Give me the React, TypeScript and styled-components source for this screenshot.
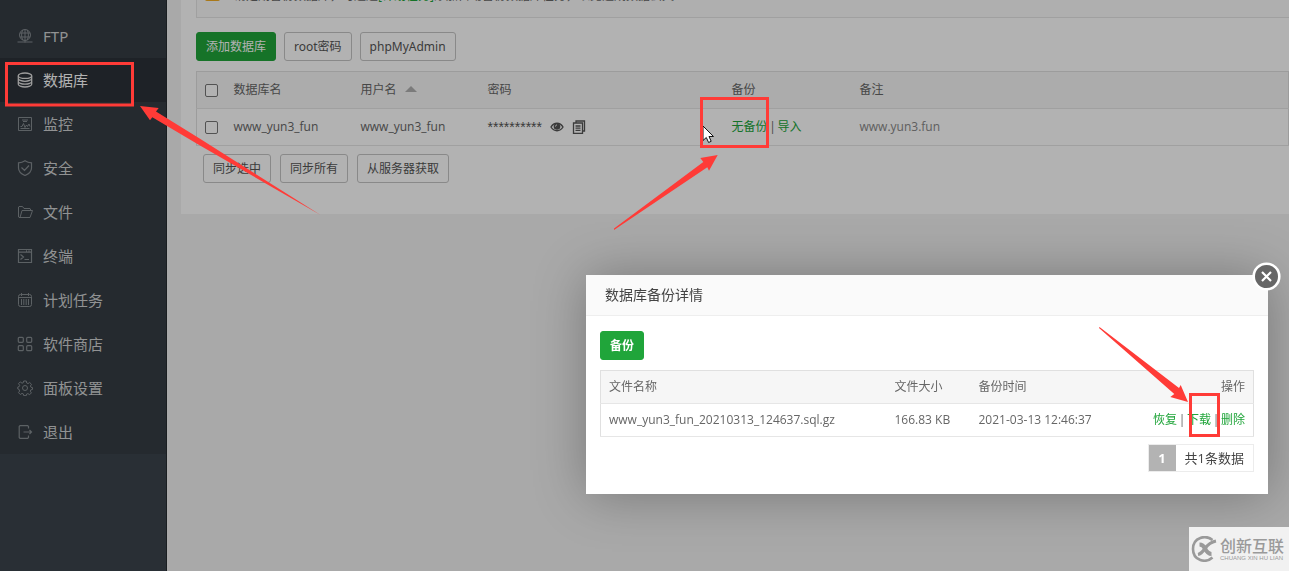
import React from 'react';
import styled, { createGlobalStyle } from 'styled-components';

const sans = '"Open Sans", "Noto Sans CJK SC", sans-serif';
const wideSans = '"Noto Sans", "Noto Sans CJK SC", sans-serif';

const GlobalStyle = createGlobalStyle`
  * { box-sizing: border-box; }
  body {
    margin: 0;
    background: #f3f3f3;
    color: #666;
    font: 12px/18px ${sans};
  }
  button { cursor: pointer; }
  a { text-decoration: none; }
`;

const Page = styled.div`
  display: flex;
  min-height: 100vh;
  overflow: hidden;
`;

const Sidebar = styled.nav`
  flex: none;
  width: 167px;
  background: #3c444d;
  border-right: 1px solid #262b30;
`;

const Menu = styled.ul`
  margin: 0;
  padding: 14px 0 0;
  list-style: none;
  background: #353d44;
`;

const MenuLink = styled.a<{ $active?: boolean }>`
  display: flex;
  align-items: center;
  gap: 10px;
  height: 44px;
  padding-left: 17px;
  background: ${(p) => (p.$active ? '#2c3138' : 'transparent')};
  color: ${(p) => (p.$active ? '#fff' : '#d0d2d3')};
  font: 15px/20px ${wideSans};

  svg {
    width: 16px;
    height: 16px;
    color: ${(p) => (p.$active ? '#e0e0e0' : '#858b90')};
  }
`;

const Main = styled.main`
  flex: 1;
  min-width: 0;
  padding-left: 14px;
`;

const Panel = styled.section`
  padding: 0 0 31px 15px;
  background: #fff;
`;

const Notice = styled.div`
  display: flex;
  align-items: flex-end;
  gap: 14px;
  height: 18px;
  padding: 0 0 12px 8px;
  overflow: hidden;
  background: #fbfbfb;
  border: solid #e6e6e6;
  border-width: 0 0 1px 1px;
`;

const WarnIcon = styled.span`
  flex: none;
  width: 15px;
  height: 16px;
  margin-bottom: 4px;
  border-radius: 2px;
  background: #f2ad24;
`;

const Toolbar = styled.div<{ $top: number; $indent?: number; $gap: number }>`
  display: flex;
  gap: ${(p) => p.$gap}px;
  padding-top: ${(p) => p.$top}px;
  padding-left: ${(p) => p.$indent ?? 0}px;
`;

const Button = styled.button<{ $primary?: boolean; $strong?: boolean }>`
  height: 29px;
  padding: 0 9px;
  border: 1px solid ${(p) => (p.$primary ? '#20a53a' : '#c4c4c4')};
  border-radius: 3px;
  background: ${(p) => (p.$primary ? '#20a53a' : '#fff')};
  color: ${(p) => (p.$primary ? '#fff' : '#555')};
  font: ${(p) => (p.$strong ? 700 : 400)} 12px/18px ${wideSans};
`;

const Table = styled.table<{ $row: number }>`
  width: 100%;
  border-collapse: collapse;
  table-layout: fixed;
  border: 1px solid #e0e0e0;

  th, td {
    height: ${(p) => p.$row}px;
    padding: 0 8px;
    border-bottom: 1px solid #e6e6e6;
    text-align: left;
    font-weight: 400;
    white-space: nowrap;
  }
  th { background: #f6f6f6; }
  .end { text-align: right; }
`;

const Check = styled.input`
  display: block;
  width: 13px;
  height: 13px;
  margin: 0;
  appearance: none;
  border: 1px solid #767676;
  border-radius: 2px;
  background: #fff;
`;

const SortArrow = styled.span`
  display: inline-block;
  margin-left: 8px;
  vertical-align: 2px;
  border: solid transparent;
  border-width: 0 6px 6px;
  border-bottom-color: #b0b0b0;
`;

const Password = styled.div`
  display: flex;
  align-items: center;
  gap: 8px;
  color: #555;
`;

const Stars = styled.span`
  font: 14px/18px "Liberation Sans", sans-serif;
`;

const IconButton = styled.button`
  display: flex;
  padding: 0;
  border: 0;
  background: none;
  color: #555;
`;

const GreenLink = styled.a`
  color: #20a53a;
`;

const Separator = styled.span`
  display: inline-block;
  width: 10px;
  text-align: center;

  &::before { content: "|"; }
`;

const Note = styled.span`
  color: #888;
`;

const Shade = styled.div`
  position: fixed;
  inset: 0;
  background: rgba(0, 0, 0, 0.3);
`;

const Dialog = styled.section`
  position: absolute;
  top: 275px;
  right: 21px;
  width: 682px;
  padding-bottom: 22px;
  background: #fff;
  box-shadow: 1px 1px 50px rgba(0, 0, 0, 0.3);
`;

const DialogTitle = styled.h2`
  margin: 0;
  padding: 0 19px;
  border-bottom: 1px solid #eee;
  background: #fafafa;
  color: #444;
  font-size: 14px;
  font-weight: 400;
  line-height: 40px;
`;

const DialogBody = styled.div`
  display: flex;
  flex-direction: column;
  align-items: flex-start;
  gap: 10px;
  padding: 15px 14px 0;
`;

const Close = styled.button`
  position: absolute;
  top: -13px;
  right: -13px;
  display: flex;
  padding: 0;
  border: 0;
  background: none;
`;

const Pager = styled.div`
  display: flex;
  align-self: flex-end;
  margin-top: -3px;
  border: 1px solid #ececec;
  color: #444;
  font-size: 13px;
  line-height: 26px;
`;

const PageNumber = styled.span`
  width: 27px;
  background: #b3b3b3;
  color: #fff;
  font-weight: 700;
  text-align: center;
`;

const PageTotal = styled.span`
  padding: 0 9px;
`;

const Marks = styled.svg`
  position: absolute;
  top: 0;
  left: 0;
  pointer-events: none;
`;

const Watermark = styled.aside`
  position: fixed;
  right: 0;
  bottom: 0;
  display: flex;
  align-items: center;
  gap: 3px;
  width: 100px;
  height: 44px;
  padding-left: 2px;
  background: #f1f1f1;
  color: #9a9a9a;
`;

const WatermarkText = styled.div`
  display: flex;
  flex-direction: column;
  white-space: nowrap;
`;

const WatermarkName = styled.span`
  font: 500 16px/18px "Noto Sans CJK SC", sans-serif;
`;

const WatermarkLatin = styled.span`
  font: 6px/8px "Liberation Sans", sans-serif;
`;

const icons: Record<string, React.ReactNode> = {
  ftp: (
    <>
      <circle cx="8" cy="7" r="5.500" />
      <path d="M3 5h10M3 9h10M8 1.500v13M5.800 2c-1.600 3-1.600 7 0 10M10.200 2c1.600 3 1.600 7 0 10M.5 14h15" />
    </>
  ),
  database: (
    <>
      <ellipse cx="8" cy="3.700" rx="6.700" ry="2.700" strokeWidth="1.300" />
      <path strokeWidth="1.300" d="M1.300 3.700v8.600c0 1.400 3 2.700 6.700 2.700s6.700-1.300 6.700-2.700V3.700M1.300 6.600C1.300 8 4.300 9.300 8 9.300s6.700-1.300 6.700-2.700M1.300 9.500C1.300 10.900 4.300 12.200 8 12.200s6.700-1.300 6.700-2.700" />
    </>
  ),
  monitor: (
    <path d="M1.500 1.500h13v13h-13zM3.500 10.500H5l1.500-3 1.500 4 1.500-2.500 1 1.500L12 8l1 2.500M5 4h6M6 5.500h4M3.500 12.500h9" />
  ),
  safe: (
    <path strokeWidth="1.200" d="M8 .8c2 1.400 4 2 6.500 2V8c0 3.500-2.500 5.800-6.500 7.500C4 13.800 1.500 11.500 1.500 8V2.800C4 2.800 6 2.200 8 .8zM4.500 7.500l3 3 4.500-5" />
  ),
  files: (
    <path d="M3.500 13.500H2l-.5-.5V3l.5-.5h3.500l1.500 2h6l.5.5v1.500M3 13.500l2-7h10.500l-2.500 7z" />
  ),
  terminal: (
    <path strokeWidth="1.200" d="M1.500 1.500h13v13h-13zM1.500 4.200h13M3.500 6.500l3 2.500-3 2.500M7.500 11.500H12M9 2.800h1M11.500 2.800h1" />
  ),
  cron: (
    <>
      <rect x="1.500" y="2.500" width="13" height="12" rx="2" />
      <path d="M1.500 5.500h13M4.500 1v3M11.500 1v3M4.500 7v6M6.800 7v6M9.200 7v6M11.500 7v6" />
    </>
  ),
  store: (
    <g strokeWidth="1.200">
      <rect x="1.300" y="1.300" width="5" height="5" rx="1" />
      <rect x="9.700" y="1.300" width="5" height="5" rx="1" />
      <rect x="1.300" y="9.700" width="5" height="5" rx="1" />
      <rect x="9.700" y="9.700" width="5" height="5" rx="1" />
    </g>
  ),
  settings: (
    <>
      <circle cx="8" cy="8" r="2.500" />
      <path d="M6.700 1h2.600l.4 2 1.300.6 1.700-1.100 1.800 1.800-1.100 1.700.6 1.300 1.500.3v1.800l-1.700.5-.500 1.300 1.100 1.700-1.800 1.800-1.700-1.100-1.300.5-.3 1.500H6.700l-.4-1.700-1.300-.5-1.700 1.100-1.800-1.800 1.100-1.700L2 9.300.800 9V7l1.400-.4.500-1.300-1.200-1.600 1.800-1.800L5 3.200l1.300-.5z" />
    </>
  ),
  exit: (
    <path strokeWidth="1.200" d="M11.500 4.500v-2l-.8-.8H3l-.8.8v11l.8.800h7.700l.8-.8v-2M6.500 8h8M12.500 6l2 2-2 2" />
  ),
};

const menu = [
  ['ftp', 'FTP'],
  ['database', '数据库'],
  ['monitor', '监控'],
  ['safe', '安全'],
  ['files', '文件'],
  ['terminal', '终端'],
  ['cron', '计划任务'],
  ['store', '软件商店'],
  ['settings', '面板设置'],
  ['exit', '退出'],
];

const MenuIcon = ({ name }: { name: string }) => (
  <svg viewBox="0 0 16 16" fill="none" stroke="currentColor" aria-hidden="true">
    {icons[name]}
  </svg>
);

export default function App() {
  return (
    <>
      <GlobalStyle />
      <Page>
        <Sidebar>
          <Menu>
            {menu.map(([icon, label]) => (
              <li key={icon}>
                <MenuLink href="#" $active={icon === 'database'}>
                  <MenuIcon name={icon} />
                  {label}
                </MenuLink>
              </li>
            ))}
          </Menu>
        </Sidebar>
        <Main>
          <Panel>
            <Notice>
              <WarnIcon />
              <span>
                请定期备份数据库，可通过<GreenLink href="#">[计划任务]</GreenLink>
                添加自动备份数据库任务，以免造成数据丢失
              </span>
            </Notice>
            <Toolbar $top={14} $gap={8}>
              <Button $primary>添加数据库</Button>
              <Button>root密码</Button>
              <Button>phpMyAdmin</Button>
            </Toolbar>
            <Toolbar $top={10} $gap={0}>
              <Table $row={37}>
                <colgroup>
                  <col width="29" />
                  <col width="127" />
                  <col width="127" />
                  <col width="244" />
                  <col width="128" />
                  <col />
                </colgroup>
                <thead>
                  <tr>
                    <th><Check type="checkbox" aria-label="全选" /></th>
                    <th>数据库名</th>
                    <th>用户名<SortArrow /></th>
                    <th>密码</th>
                    <th>备份</th>
                    <th>备注</th>
                  </tr>
                </thead>
                <tbody>
                  <tr>
                    <td><Check type="checkbox" aria-label="www_yun3_fun" /></td>
                    <td>www_yun3_fun</td>
                    <td>www_yun3_fun</td>
                    <td>
                      <Password>
                        <Stars>**********</Stars>
                        <IconButton aria-label="显示密码">
                          <svg width="14" height="14" viewBox="0 0 14 14">
                            <path d="M1 7c3-5 9-5 12 0-3 5-9 5-12 0z" fill="none" stroke="currentColor" strokeWidth="1.400" />
                            <circle cx="7" cy="6.500" r="3.300" fill="currentColor" />
                            <path d="M5.500 6.500c0-1 .5-1.500 1.500-1.500" fill="none" stroke="#fff" />
                          </svg>
                        </IconButton>
                        <IconButton aria-label="复制密码">
                          <svg width="14" height="14" viewBox="0 0 14 14" fill="none" stroke="currentColor" strokeWidth="1.300">
                            <path d="M4 3V1h8.500v10H10.500M1.500 3h9v10.300h-9zM3.500 6h5M3.500 8.200h5M3.500 10.400h5" />
                          </svg>
                        </IconButton>
                      </Password>
                    </td>
                    <td>
                      <GreenLink href="#">无备份</GreenLink>
                      <Separator />
                      <GreenLink href="#">导入</GreenLink>
                    </td>
                    <td><Note>www.yun3.fun</Note></td>
                  </tr>
                </tbody>
              </Table>
            </Toolbar>
            <Toolbar $top={8} $indent={7} $gap={9}>
              <Button>同步选中</Button>
              <Button>同步所有</Button>
              <Button>从服务器获取</Button>
            </Toolbar>
          </Panel>
        </Main>
      </Page>

      <Shade />
      <Dialog role="dialog" aria-labelledby="backup-title">
        <DialogTitle id="backup-title">数据库备份详情</DialogTitle>
        <Close aria-label="关闭">
          <svg width="29" height="29" viewBox="0 0 29 29">
            <circle cx="14.500" cy="14.500" r="12.800" fill="#666" stroke="#fff" strokeWidth="2.600" />
            <path d="M10 10l9 9M19 10l-9 9" stroke="#fff" strokeWidth="2.200" />
          </svg>
        </Close>
        <DialogBody>
          <Button $primary $strong>备份</Button>
          <Table $row={33}>
            <colgroup>
              <col />
              <col width="84" />
              <col width="138" />
              <col width="145" />
            </colgroup>
            <thead>
              <tr>
                <th>文件名称</th>
                <th>文件大小</th>
                <th>备份时间</th>
                <th className="end">操作</th>
              </tr>
            </thead>
            <tbody>
              <tr>
                <td>www_yun3_fun_20210313_124637.sql.gz</td>
                <td>166.83 KB</td>
                <td>2021-03-13 12:46:37</td>
                <td className="end">
                  <GreenLink href="#">恢复</GreenLink>
                  <Separator />
                  <GreenLink href="#">下载</GreenLink>
                  <Separator />
                  <GreenLink href="#">删除</GreenLink>
                </td>
              </tr>
            </tbody>
          </Table>
          <Pager>
            <PageNumber>1</PageNumber>
            <PageTotal>共1条数据</PageTotal>
          </Pager>
        </DialogBody>
      </Dialog>

      <Marks width="1289" height="571" viewBox="0 0 1289 571" aria-hidden="true">
        <path
          d="M703 126v14.500l3.300-3 2.300 5 2.600-1.200-2.200-4.800h4.500z"
          fill="#fff"
          stroke="#111"
        />
        <g fill="none" stroke="#ff3b37" strokeWidth="3">
          <path d="M6.500 63.500h126v41.500H6.500z" />
          <path d="M701.500 98.500h66v48h-66z" />
          <path d="M1190.500 394.500h28v41h-28z" />
        </g>
        <g fill="#ff3b37">
          <path d="M140 106l18.700 2-2.700 3.500 44 27.200L320.500 215 200 145.500l-47.700-28.200-2.300 3z" />
          <path d="M717.700 155l-17.400 3 3 4L614 228.500v1.500l93.300-62.700 1.700 3.400z" />
          <path d="M1188 402l-7.300-17-1.700 3-79.500-61-.5 1 75.300 66-4 3z" />
        </g>
      </Marks>

      <Watermark>
        <svg width="26" height="26" viewBox="0 0 26 26" fill="none" stroke="currentColor" aria-hidden="true">
          <path d="M21.500 4C15-1.500 2 1 2 13s13 14.500 19.500 8.500" strokeWidth="2.600" />
          <path d="M8.500 8.500c3 0 4 1 5.500 4s3 5.500 6.500 5.500" strokeWidth="4" />
          <path d="M25 5c-5 1-8.500 4-11 7.500S10 18 7 18.500" strokeWidth="3.200" />
        </svg>
        <WatermarkText>
          <WatermarkName>创新互联</WatermarkName>
          <WatermarkLatin>CHUANG XIN HU LIAN</WatermarkLatin>
        </WatermarkText>
      </Watermark>
    </>
  );
}
